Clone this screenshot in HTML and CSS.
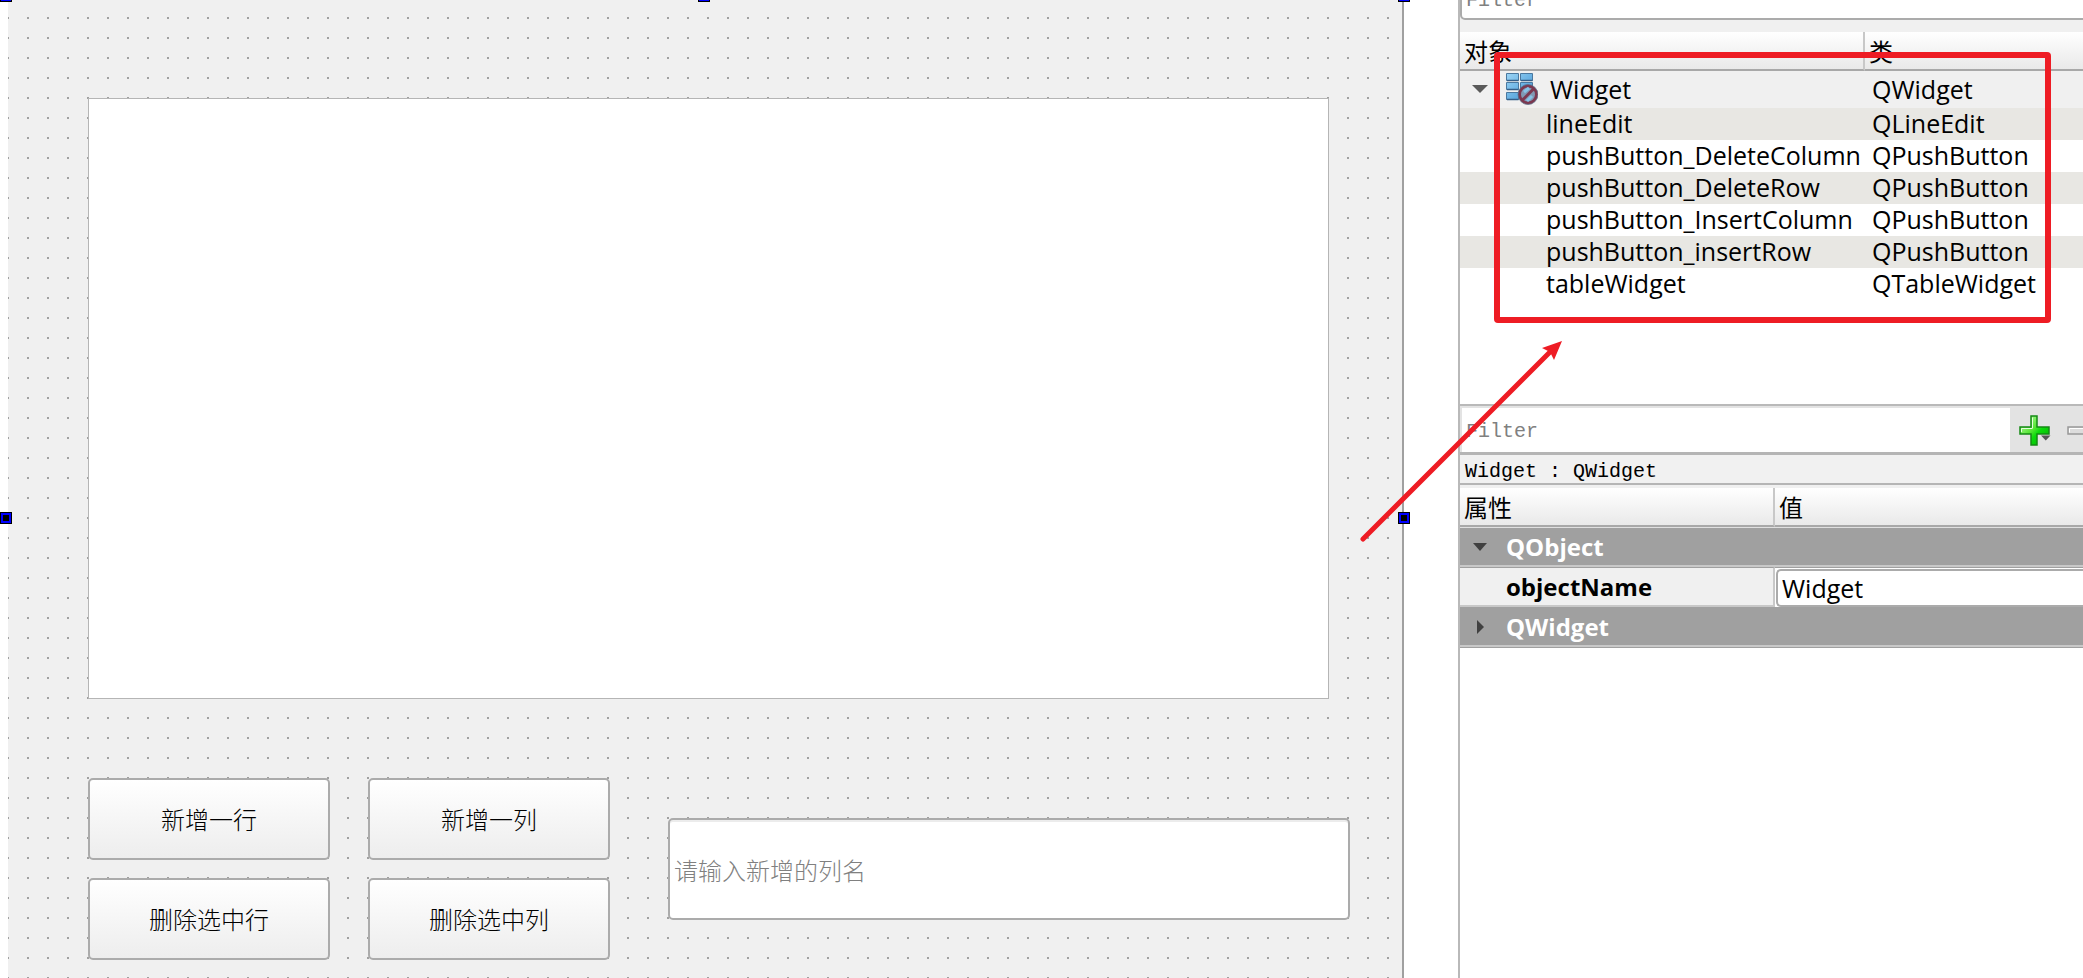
FILE: index.html
```html
<!DOCTYPE html>
<html lang="zh-CN">
<head>
<meta charset="utf-8">
<title>Widget</title>
<link rel="stylesheet" href="styles.css">
</head>
<body>
<div class="workspace">
  <main class="designer">
    <form class="form">
      <div class="table-widget"></div>
      <div class="controls">
        <div class="buttons">
          <button type="button" class="push-button">新增一行</button>
          <button type="button" class="push-button">新增一列</button>
          <button type="button" class="push-button">删除选中行</button>
          <button type="button" class="push-button">删除选中列</button>
        </div>
        <input class="line-edit" type="text" placeholder="请输入新增的列名" aria-label="列名">
      </div>
    </form>
    <span class="handle handle-top handle-left"></span>
    <span class="handle handle-top handle-center"></span>
    <span class="handle handle-top handle-right"></span>
    <span class="handle handle-middle handle-left"></span>
    <span class="handle handle-middle handle-right"></span>
  </main>

  <aside class="panel">
    <section class="inspector">
      <input class="object-filter" type="text" placeholder="Filter" aria-label="对象 Filter">
      <table class="grid tree">
        <colgroup><col class="col-object"><col></colgroup>
        <thead><tr><th>对象</th><th>类</th></tr></thead>
        <tbody>
          <tr class="root">
            <td><div class="root-name">
              <svg class="arrow" viewBox="0 0 16 16"><path d="M0 4h16l-8 8z" fill="#5a5a5a"/></svg>
              <svg class="widget-icon" viewBox="0 0 32 32">
                <defs><linearGradient id="cell" x1="0" y1="0" x2="1" y2="1"><stop offset="0" stop-color="#9bd4f5"/><stop offset="1" stop-color="#3f93d2"/></linearGradient></defs>
                <g fill="url(#cell)" stroke="#4b789f">
                  <path d="M.5.5h12v7H.5zM14.500.5h12v7h-12zM.5 9.500h12v7H.5zM14.500 9.500h12v7h-12zM.5 19.500h12v7H.5z"/>
                </g>
                <path d="M1 7.500h11.500M15 7.500h11.500M1 16.500h11.500M1 26.500h11.500" stroke="#365f88" stroke-width="1.500"/>
                <circle cx="22" cy="21.500" r="8.500" fill="#8199b4" stroke="#7c3850" stroke-width="3"/>
                <circle cx="22" cy="21.500" r="10" fill="none" stroke="#58738c" stroke-width=".7"/>
                <path d="M18 19l5-4M21 28l5-5" stroke="#87c3e8" stroke-width="3"/>
                <path d="M16 27.500l12-12" stroke="#7c3850" stroke-width="3"/>
              </svg>
              <span>Widget</span></div></td>
            <td>QWidget</td>
          </tr>
          <tr><td>lineEdit</td><td>QLineEdit</td></tr>
          <tr><td>pushButton_DeleteColumn</td><td>QPushButton</td></tr>
          <tr><td>pushButton_DeleteRow</td><td>QPushButton</td></tr>
          <tr><td>pushButton_InsertColumn</td><td>QPushButton</td></tr>
          <tr><td>pushButton_insertRow</td><td>QPushButton</td></tr>
          <tr><td>tableWidget</td><td>QTableWidget</td></tr>
        </tbody>
      </table>
    </section>

    <section class="properties">
      <div class="property-bar">
        <input class="property-filter" type="text" placeholder="Filter" aria-label="属性 Filter">
        <div class="tools">
          <button type="button" class="tool" aria-label="Add">
            <svg width="32" height="32" viewBox="0 0 32 32">
              <defs><linearGradient id="plus" x1="0" y1="0" x2="1" y2="1"><stop offset="0" stop-color="#d2ffc0"/><stop offset=".45" stop-color="#55e533"/><stop offset=".6" stop-color="#0bdb0b"/><stop offset="1" stop-color="#00a800"/></linearGradient></defs>
              <path d="M12 1h6v11h12v7H18v11h-6V19H1v-7h11z" fill="url(#plus)" stroke="#158a15" stroke-width="1.500"/>
              <path d="M13.500 13V2.500M2.500 17v-3.500h11" fill="none" stroke="#e4ffdc"/>
              <path d="M22 20.500h9.500l-4.750 5z" fill="#555"/>
            </svg>
          </button>
          <button type="button" class="tool" aria-label="Remove">
            <svg width="32" height="32" viewBox="0 0 32 32"><path d="M1 12h29v7H1z" fill="#dcdcdc" stroke="#999" stroke-width="1.500"/><path d="M2.500 17.500v-4H29" fill="none" stroke="#fff"/></svg>
          </button>
        </div>
      </div>
      <div class="selected">Widget : QWidget</div>
      <table class="grid props">
        <colgroup><col class="col-property"><col></colgroup>
        <thead><tr><th>属性</th><th>值</th></tr></thead>
        <tbody>
          <tr class="group"><td colspan="2"><div class="group-name"><svg class="arrow" viewBox="0 0 16 16"><path d="M1 4h14l-7 8z" fill="#404040"/></svg>QObject</div></td></tr>
          <tr class="property"><td><label for="object-name">objectName</label></td><td><input id="object-name" class="value" type="text" value="Widget"></td></tr>
          <tr class="group"><td colspan="2"><div class="group-name"><svg class="arrow" viewBox="0 0 16 16"><path d="M5 1v14l7-7z" fill="#404040"/></svg>QWidget</div></td></tr>
        </tbody>
      </table>
    </section>

    <svg class="annotation" width="700" height="560" viewBox="0 0 700 560">
      <rect x="139" y="55" width="551" height="265" rx="1" fill="none" stroke="#ee1c24" stroke-width="6"/>
      <path d="M5 539L193 351" stroke="#ee1c24" stroke-width="5" stroke-linecap="round"/>
      <path d="M204 341l-20 7 8 4 4 8z" fill="#ee1c24"/>
    </svg>
  </aside>
</div>
</body>
</html>
```
FILE: styles.css
```css
* { box-sizing: border-box; }

body {
  margin: 0;
  overflow: hidden;
  background: #fff;
  color: #000;
  font: 25px/30px "Open Sans", "Noto Sans CJK SC", sans-serif;
}

button, input { font: inherit; color: inherit; outline: none; }

.workspace {
  display: grid;
  grid-template-columns: minmax(0, 1404fr) minmax(0, 625fr);
  gap: 54px;
  height: 100vh;
}

/* form editor */
.designer {
  position: relative;
  padding-left: 8px;
}

.form {
  min-height: 100%;
  padding: 98px 52px 18px 80px;
  border-right: 2px solid #a0a0a0;
  background: #f0f0f0 conic-gradient(from 270deg at 2px 2px, #a0a0a0 90deg, transparent 0) 19px 17px / 20px 20px;
}

.table-widget {
  height: 601px;
  margin-right: 21px;
  border: 1px solid #b5b5b5;
  background: #fff;
}

.controls {
  display: grid;
  grid-template-columns: minmax(0, 522fr) minmax(0, 682fr);
  align-items: center;
  gap: 58px;
  margin-top: 79px;
}

.buttons {
  display: grid;
  grid-template-columns: 1fr 1fr;
  gap: 18px 38px;
}

.push-button {
  height: 82px;
  padding: 0;
  border: 2px solid #ababab;
  border-radius: 5px;
  background: linear-gradient(#fff, #ededed);
  font: 300 24px/32px "Noto Sans CJK SC", sans-serif;
}

.line-edit {
  width: 100%;
  height: 102px;
  padding: 0 4px;
  border: 2px solid #ababab;
  border-radius: 5px;
  background: #fff;
  box-shadow: inset 0 2px #ececec;
  font: 300 24px/32px "Noto Sans CJK SC", sans-serif;
}

input::placeholder { color: #808080; opacity: 1; }

.handle {
  position: absolute;
  width: 12px;
  height: 12px;
  border: 1px solid #000;
  background: #000;
  box-shadow: inset 0 0 0 2px #00f;
}

.handle-top { top: -10px; }
.handle-middle { top: 512px; }
.handle-left { left: 0; }
.handle-center { left: calc(50% - 4px); }
.handle-right { right: -6px; }

/* side panel */
.panel {
  position: relative;
  border-left: 2px solid #b9b9b9;
}

.inspector {
  height: 404px;
  overflow: hidden;
  background: linear-gradient(#f0f0f0 0 60px, #fff 0);
}

.object-filter {
  display: block;
  width: 120%;
  height: 44px;
  margin-top: -24px;
  padding: 4px 4px 0;
  border: 2px solid #ababab;
  border-radius: 5px;
  background: #fff;
  font: 20px/32px "Liberation Mono", monospace;
}

.grid {
  width: 100%;
  border-spacing: 0;
  table-layout: fixed;
}

.tree { margin-top: 12px; }

.col-object { width: 405px; }
.col-property { width: 315px; }

.grid th {
  height: 39px;
  padding: 0 4px;
  border-bottom: 2px solid #a8a8a8;
  background: linear-gradient(#fff, #e9e9e9);
  font: 24px/32px "Noto Sans CJK SC", sans-serif;
  text-align: left;
}

.grid th:first-child { border-right: 2px solid #c8c8c8; }

.tree td {
  height: 32px;
  padding: 0 0 2px 7px;
  white-space: nowrap;
}

.tree td:first-child { padding-left: 86px; }
.tree .root td { height: 37px; background: #f0f0f0; }
.tree .root td:first-child { padding-left: 12px; }
.tree tr:nth-child(even) td { background: #e8e7e3; }

.root-name, .group-name {
  display: flex;
  align-items: center;
}

.arrow { width: 16px; height: 16px; margin-right: 18px; }
.widget-icon { width: 32px; height: 32px; margin-right: 12px; }

.property-bar {
  display: flex;
  height: 51px;
  border-top: 2px solid #b9b9b9;
  border-bottom: 3px solid #b5b5b5;
  background: #e3e3e3;
}

.property-filter {
  flex: 1 1 0;
  min-width: 0;
  margin: 2px 0 0 2px;
  padding: 4px 4px 0;
  border: 0;
  background: #fff;
  font: 20px/32px "Liberation Mono", monospace;
}

.tools {
  display: flex;
  flex: 0 0 73px;
  gap: 16px;
  padding: 9px 0 0 9px;
  overflow: hidden;
}

.tool {
  flex: none;
  width: 32px;
  height: 32px;
  padding: 0;
  border: 0;
  background: none;
}

.tool svg { display: block; }

.selected {
  height: 30px;
  margin-bottom: 3px;
  padding: 2px 5px 0;
  border-bottom: 2px solid #b5b5b5;
  box-shadow: 0 3px #f0f0f0;
  background: #f1f1f1;
  font: 20px/30px "Liberation Mono", monospace;
}

.props td {
  height: 40px;
  padding: 0;
  border-top: 1px solid #a0a0a0;
}

.props tr:first-child td { border-top-color: #e0e0e0; }

.group td {
  border-bottom: 2px solid #c8c8c8;
  background: #a0a0a0;
  color: #fff;
  font-size: 24px;
  font-weight: 700;
}

.props tbody { box-shadow: 0 1px #a0a0a0; }

.group-name { padding-left: 12px; }

.props .property td:first-child {
  padding-left: 46px;
  border-right: 2px solid #c8c8c8;
  border-bottom: 2px solid #c8c8c8;
  background: #f0f0f0;
  font-size: 24px;
  font-weight: 700;
}

.value {
  display: block;
  width: 100%;
  height: 38px;
  margin-left: 1px;
  padding: 0 4px;
  border: 2px solid #ababab;
  border-right: 0;
  border-radius: 5px 0 0 5px;
  background: #fff;
}

/* callout over both panes */
.annotation {
  position: absolute;
  top: 0;
  left: -102px;
  overflow: visible;
  pointer-events: none;
}
```
